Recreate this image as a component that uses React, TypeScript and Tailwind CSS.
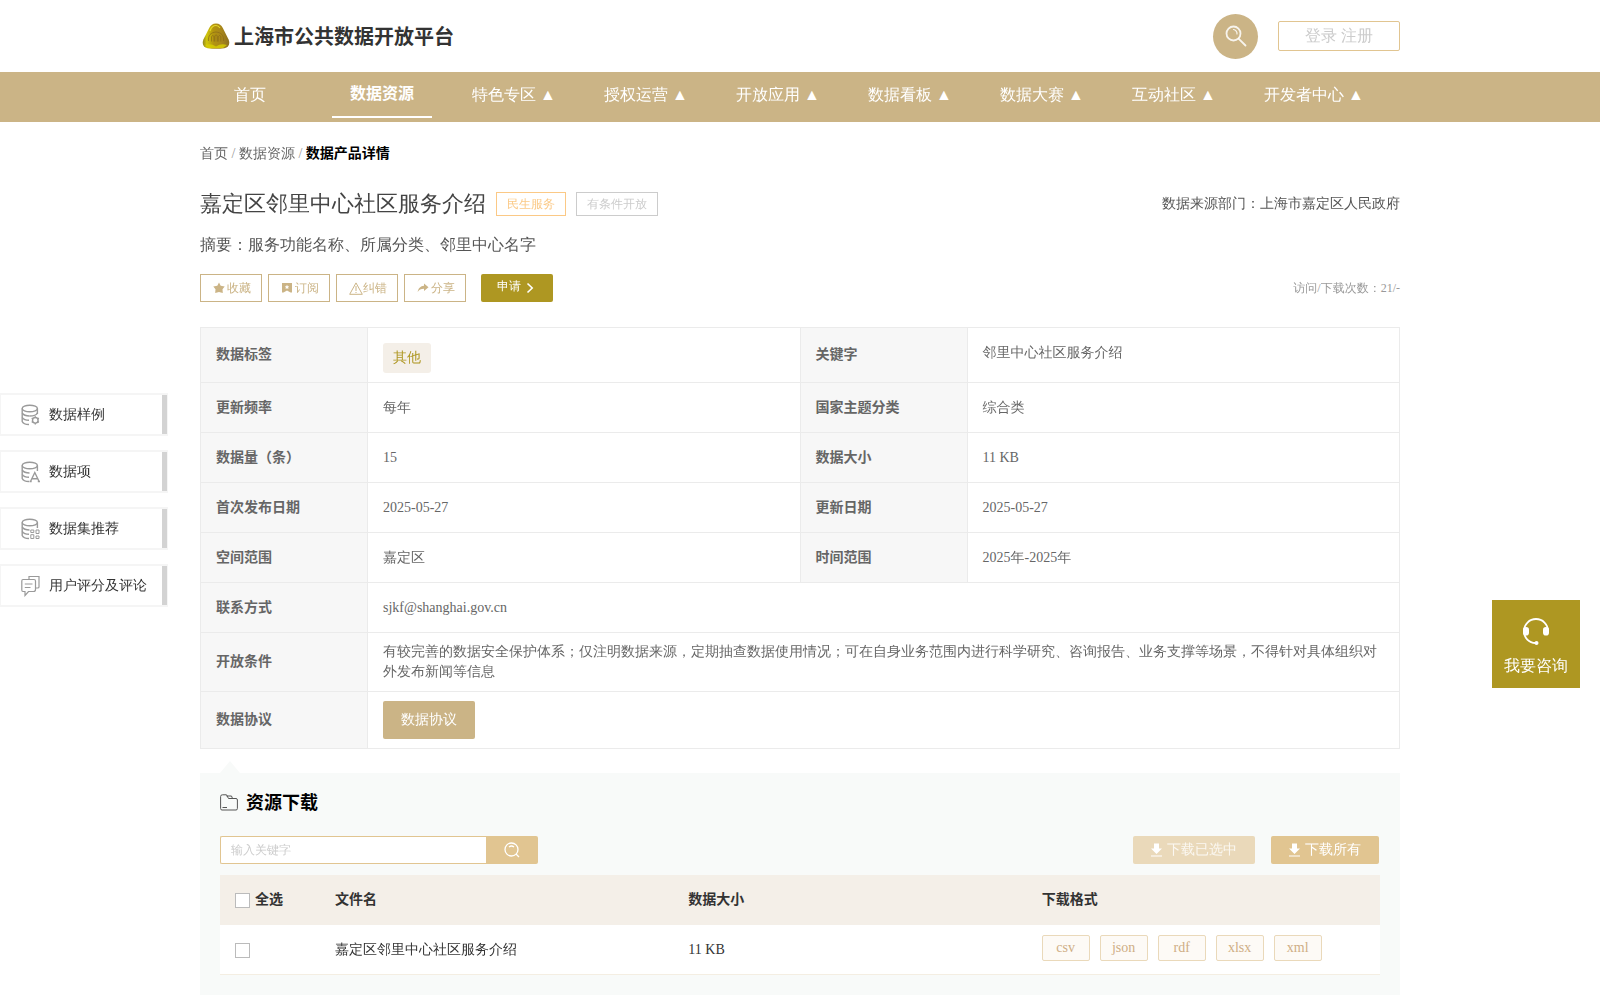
import { useState } from "react";

const navItems = [
  { label: "首页", menu: false },
  { label: "数据资源", menu: false },
  { label: "特色专区", menu: true },
  { label: "授权运营", menu: true },
  { label: "开放应用", menu: true },
  { label: "数据看板", menu: true },
  { label: "数据大赛", menu: true },
  { label: "互动社区", menu: true },
  { label: "开发者中心", menu: true },
];

const formats = ["csv", "json", "rdf", "xlsx", "xml"];

const infoRows = [
  ["更新频率", "每年", "国家主题分类", "综合类"],
  ["数据量（条）", "15", "数据大小", "11 KB"],
  ["首次发布日期", "2025-05-27", "更新日期", "2025-05-27"],
  ["空间范围", "嘉定区", "时间范围", "2025年-2025年"],
];

// Zen Hei has no bold face, so bold text goes straight to Noto
const bold = "font-['Liberation_Serif','Noto_Sans_CJK_SC',serif] font-bold";

function Logo() {
  return (
    <svg width="28" height="26" viewBox="0 0 28 26" aria-hidden="true">
      <defs>
        <linearGradient id="gold" x1="0" y1="0" x2="1" y2="0">
          <stop offset="0" stopColor="#8f8420" />
          <stop offset="0.15" stopColor="#d0c60c" />
          <stop offset="0.4" stopColor="#b3950f" />
          <stop offset="0.7" stopColor="#a8861a" />
          <stop offset="1" stopColor="#8c6f20" />
        </linearGradient>
      </defs>
      <path
        d="M14 0.5C17.5 0.5 19.2 2 20.8 5L26.6 16.5C28.4 21 26.6 24.6 22.4 25.2C17 25.9 11 25.9 5.6 25.2C1.4 24.6-0.4 21 1.4 16.5L7.2 5C8.8 2 10.5 0.5 14 0.5Z"
        fill="url(#gold)"
      />
      <path d="M3 22Q9 20 14 23.5Q19 20 25 22L21 25H7Z" fill="#d8d000" opacity="0.8" />
      <path
        d="M6.5 18C6 12.5 8.5 9.5 14 9C19.500 9.500 22 12.500 21.500 18M9.500 18.500V14C10 12 11.500 12 12 14V18.500M12.800 18.500V13C13.400 11.500 14.800 11.500 15.300 13V18.500M16.200 18.500V14C17 12 18.500 12 18.800 14V18.500"
        fill="none"
        stroke="#8a6a18"
        strokeWidth="0.7"
      />
      <path d="M8 8C9.500 3.500 12 2.500 14 2.500C16 2.500 17 3.500 18 5" fill="none" stroke="#e6da2a" strokeWidth="1.2" />
    </svg>
  );
}

function SearchIcon() {
  return (
    <svg width="22" height="22" viewBox="0 0 22 22" fill="none" stroke="#fff" strokeOpacity="0.85" strokeLinecap="round" aria-hidden="true">
      <circle cx="8.500" cy="8.500" r="7" strokeWidth="1.800" />
      <path d="M8.500 4.500A4 4 0 0 1 12 9" strokeWidth="1.200" />
      <path d="M13.800 13.800L20.500 20.500" strokeWidth="1.800" />
    </svg>
  );
}

function Cylinder({ kind }: { kind: string }) {
  return (
    <svg width="20" height="22" viewBox="0 0 20 22" fill="none" stroke="#9a9a9a" strokeWidth="1.400" aria-hidden="true">
      <ellipse cx="8.800" cy="4.500" rx="7.600" ry="3.300" />
      <path d="M1.200 4.500V17.500C2 19.500 4.500 20.500 8 20.500M16.400 4.500V10" />
      <path d="M1.200 9C2.500 11 5 12 8.500 12" />
      <path d="M1.200 13.300C2.500 15.300 5 16.200 8 16.200" />
      {kind === "sample" && (
        <>
          <path d="M8.500 12C12.500 12 15.500 11 16.400 9" />
          <circle cx="14.300" cy="16.300" r="2.800" />
          <path d="M14.300 12.200V13.500M14.300 19.100V20.400M10.700 14.200L11.900 14.900M16.700 17.700L17.900 18.400M10.700 18.400L11.900 17.700M16.700 14.900L17.900 14.200" />
        </>
      )}
      {kind === "item" && <path d="M9.500 20.500L13.800 11.500L18.100 20.500M11 17.800H16.700M8.500 20.500H10.700M16.800 20.500H19" />}
      {kind === "set" && (
        <path d="M9.800 12H12.800V14.500H9.800ZM15 12H18V15.500H15ZM9.800 16.700H12.800V20.500H9.800ZM15 18H18V20.500H15Z" strokeWidth="1" />
      )}
    </svg>
  );
}

function CommentIcon() {
  return (
    <svg width="20" height="22" viewBox="0 0 20 22" fill="none" stroke="#9a9a9a" strokeWidth="1.200" aria-hidden="true">
      <path d="M2 4.500H13Q14.500 4.500 14.500 6V14.500Q14.500 16.500 12.500 16.500H7.500L4 20.500V16.500H2Q0.800 16.500 0.800 15V6Q0.800 4.500 2 4.500Z" />
      <path d="M8 4.500V1.500H18V12Q18 13 16.500 13H14.500M3.800 9H11.500M3.800 12.500H9.500" />
    </svg>
  );
}

const sideLinks = [
  { label: "数据样例", icon: <Cylinder kind="sample" /> },
  { label: "数据项", icon: <Cylinder kind="item" /> },
  { label: "数据集推荐", icon: <Cylinder kind="set" /> },
  { label: "用户评分及评论", icon: <CommentIcon /> },
];

function DownloadIcon() {
  return (
    <svg width="11" height="14" viewBox="0 0 11 14" fill="#fff" aria-hidden="true">
      <path d="M3 0.500H8V5.500H11L5.500 11L0 5.500H3ZM0 12.500H11V13.500H0Z" />
    </svg>
  );
}

const actions = [
  {
    label: "收藏",
    icon: (
      <svg width="14" height="12" viewBox="0 0 14 12" fill="#cbb486" aria-hidden="true">
        <path d="M6 0.500L7.700 3.700L11.700 4.500L9.500 7.300L9.800 11L6 10L2.200 11L2.500 7.300L0.300 4.500L4.300 3.700Z" />
      </svg>
    ),
  },
  {
    label: "订阅",
    icon: (
      <svg width="14" height="12" viewBox="0 0 14 12" fill="#cbb486" aria-hidden="true">
        <path fillRule="evenodd" d="M1 1H11V10.500H9.500L6 8.500L2.500 10.500H1ZM6 2.800L5.300 4.200L3.800 4.500L4.900 5.500L4.600 7L6 6.300L7.400 7L7.100 5.500L8.200 4.500L6.700 4.200Z" />
      </svg>
    ),
  },
  {
    label: "纠错",
    icon: (
      <svg width="14" height="13" viewBox="0 0 14 13" fill="none" stroke="#cbb486" aria-hidden="true">
        <path d="M7 0.900L13.300 12.300H0.700ZM7 4V9M7 10V11" />
      </svg>
    ),
  },
  {
    label: "分享",
    icon: (
      <svg width="14" height="12" viewBox="0 0 14 12" fill="#cbb486" aria-hidden="true">
        <path d="M7 1.500L11.500 5.300L7 9V6.800C4 6.800 2 7.800 0.700 10C1 6.500 3.500 4 7 3.700Z" />
      </svg>
    ),
  },
];

function Label({ children }: { children: string }) {
  return (
    <th scope="row" className={`border border-[#ebebeb] bg-[#f7f7f7] px-[15px] text-left ${bold}`}>
      {children}
    </th>
  );
}

export default function App() {
  const [keyword, setKeyword] = useState("");
  const [checked, setChecked] = useState(false);

  return (
    <div className="bg-white pb-[5px] font-['Liberation_Serif','WenQuanYi_Zen_Hei','Noto_Sans_CJK_SC',serif] text-[14px] leading-5 text-[#666]">
      <header>
        <div className="mx-auto flex h-[72px] max-w-[1200px] items-center justify-between">
          <a href="#" className="flex items-center gap-1 pl-[2px] text-[20px] leading-7 text-[#333]">
            <Logo />
            <h1 className={`pt-px ${bold}`}>上海市公共数据开放平台</h1>
          </a>
          <div className="flex items-center gap-5">
            <button type="button" aria-label="搜索" className="flex size-[45px] items-center justify-center rounded-full bg-[#cbb486]">
              <SearchIcon />
            </button>
            <div className="h-[30px] w-[122px] rounded-[2px] border border-[#e1c591] text-center text-[16px] leading-7 text-[#ccc]">
              <a href="#">登录</a> <a href="#">注册</a>
            </div>
          </div>
        </div>
        <nav className="h-[50px] bg-[#cbb486]">
          <ul className="mx-auto flex max-w-[1200px] gap-8 text-[16px] text-white">
            {navItems.map((item) => (
              <li key={item.label}>
                <a
                  href="#"
                  className={
                    item.label === "数据资源"
                      ? `block min-w-[100px] border-b-2 border-white text-center leading-[44px] whitespace-nowrap ${bold}`
                      : "block min-w-[100px] px-2 text-center leading-[46px] whitespace-nowrap"
                  }
                >
                  {item.label}
                  {item.menu && " ▲"}
                </a>
              </li>
            ))}
          </ul>
        </nav>
      </header>

      <main className="mx-auto max-w-[1200px]">
        {/* Breadcrumb */}
        <div className="h-[62px] pt-px leading-[62px] text-[#999]">
          <a href="#" className="text-[#666]">首页</a> / <a href="#" className="text-[#666]">数据资源</a> /{" "}
          <b className={`text-black ${bold}`}>数据产品详情</b>
        </div>

        {/* Title */}
        <div className="flex h-10 items-center">
          <h2 className="text-[22px] leading-8 text-[#444]">嘉定区邻里中心社区服务介绍</h2>
          <span className="ml-[10px] h-6 border border-[#fbc986] px-[10px] text-[12px] leading-[22px] text-[#fbc986]">民生服务</span>
          <span className="ml-[10px] h-6 border border-[#ccc] px-[10px] text-[12px] leading-[22px] text-[#ccc]">有条件开放</span>
          <span className="ml-auto text-[#555]">数据来源部门：上海市嘉定区人民政府</span>
        </div>
        <p className="mt-2 text-[16px] leading-[26px] text-[#555]">摘要：服务功能名称、所属分类、邻里中心名字</p>

        <div className="mt-4 flex h-7 items-center gap-[6px]">
          {actions.map((a) => (
            <button
              key={a.label}
              type="button"
              className="flex h-7 items-center border border-[#cbb486] pr-[10px] pl-3 text-[12px] text-[#cbb486]"
            >
              {a.icon}
              {a.label}
            </button>
          ))}
          <button type="button" className="ml-[9px] flex h-7 w-[72px] items-start gap-[5px] rounded-[2px] bg-[#ae9722] pt-[2px] pl-4 text-[12px] leading-5 text-white">
            申请
            <svg width="9" height="12" viewBox="0 0 9 12" fill="none" stroke="#fff" strokeWidth="1.600" className="mt-[6px]" aria-hidden="true">
              <path d="M1.500 1.500L6.200 6L1.500 10.500" />
            </svg>
          </button>
          <span className="ml-auto text-[12px] text-[#999]">访问/下载次数：21/-</span>
        </div>

        {/* Detail table */}
        <table className="mt-[25px] w-full table-fixed border-collapse">
          <colgroup>
            <col className="w-[167px]" />
            <col />
            <col className="w-[167px]" />
            <col />
          </colgroup>
          <tbody>
            <tr className="h-[55px]">
              <Label>数据标签</Label>
              <td className="border border-[#ebebeb] px-[15px] pt-[6px]">
                <span className="block w-fit rounded-[3px] bg-[#f4efe8] px-[10px] leading-[30px] text-[#ae9722]">其他</span>
              </td>
              <Label>关键字</Label>
              <td className="border border-[#ebebeb] px-[15px] pb-1">邻里中心社区服务介绍</td>
            </tr>
            {infoRows.map((row) => (
              <tr key={row[0]} className="h-[50px]">
                <Label>{row[0]}</Label>
                <td className="border border-[#ebebeb] px-[15px]">{row[1]}</td>
                <Label>{row[2]}</Label>
                <td className="border border-[#ebebeb] px-[15px]">{row[3]}</td>
              </tr>
            ))}
            <tr className="h-[50px]">
              <Label>联系方式</Label>
              <td colSpan={3} className="border border-[#ebebeb] px-[15px]">sjkf@shanghai.gov.cn</td>
            </tr>
            <tr className="h-[59px]">
              <Label>开放条件</Label>
              <td colSpan={3} className="border border-[#ebebeb] px-[15px]">
                有较完善的数据安全保护体系；仅注明数据来源，定期抽查数据使用情况；可在自身业务范围内进行科学研究、咨询报告、业务支撑等场景，不得针对具体组织对外发布新闻等信息
              </td>
            </tr>
            <tr className="h-[57px]">
              <Label>数据协议</Label>
              <td colSpan={3} className="border border-[#ebebeb] px-[15px]">
                <button type="button" className="block h-[38px] rounded-[2px] bg-[#cbb486] px-[18px] text-white">
                  数据协议
                </button>
              </td>
            </tr>
          </tbody>
        </table>

        {/* Downloads */}
        <svg width="20" height="12" viewBox="0 0 20 12" className="mt-3 ml-5 block" aria-hidden="true">
          <path d="M10 0L20 12H0Z" fill="#f8faf9" />
        </svg>
        <section className="bg-[#f8faf9] px-5 pb-5">
          <div className="flex h-[63px] items-center gap-2 pb-1">
            <svg width="18" height="17" viewBox="0 0 18 17" fill="none" stroke="#555" aria-hidden="true">
              <path d="M2.500 0.800H6.500L8.500 4.500H16Q17.400 4.500 17.400 6V14.500Q17.400 16 16 16H2Q0.600 16 0.600 14.500V2.500Q0.600 0.800 2.500 0.800ZM6.500 2H11.500L12.500 4.500M2.500 13.500H7" />
            </svg>
            <h3 className={`text-[18px] leading-6 text-black ${bold}`}>资源下载</h3>
          </div>

          <div className="flex h-7 items-center">
            <input
              type="text"
              aria-label="输入关键字"
              placeholder="输入关键字"
              value={keyword}
              onChange={(e) => setKeyword(e.target.value)}
              className="h-7 w-[266px] rounded-l-[2px] border border-r-0 border-[#e1c591] bg-white px-[10px] text-[12px] outline-none placeholder:text-[#ccc]"
            />
            <button type="button" aria-label="搜索资源" className="flex h-7 w-[52px] items-center justify-center rounded-r-[2px] bg-[#e1c591]">
              <svg width="16" height="16" viewBox="0 0 16 16" fill="none" stroke="#fff" strokeWidth="1.300" aria-hidden="true">
                <circle cx="7.500" cy="7.500" r="6.500" />
                <path d="M5 5Q7.500 3 10 5M12 12L15 15" />
              </svg>
            </button>
            <button type="button" disabled className="mr-4 ml-auto flex h-7 w-[122px] items-center justify-center gap-[5px] rounded-[2px] bg-[#ead9ba] text-white/80">
              <DownloadIcon />
              下载已选中
            </button>
            <button type="button" className="mr-px flex h-7 w-[108px] items-center justify-center gap-[5px] rounded-[2px] bg-[#e1c591] text-white">
              <DownloadIcon />
              下载所有
            </button>
          </div>

          <table className="mt-[11px] w-full table-fixed border-separate border-spacing-0 text-left text-[#333]">
            <colgroup>
              <col className="w-[100px]" />
              <col />
              <col />
              <col />
            </colgroup>
            <thead>
              <tr className={`h-[50px] bg-[#f4efe8] ${bold}`}>
                <th scope="col" className="pl-[15px]">
                  <label className="flex items-center gap-[5px]">
                    <input
                      type="checkbox"
                      checked={checked}
                      onChange={() => setChecked(!checked)}
                      className="size-[15px] appearance-none border border-[#bbb] bg-white checked:bg-[#cbb486]"
                    />
                    全选
                  </label>
                </th>
                <th scope="col" className="px-[15px]">文件名</th>
                <th scope="col" className="px-[15px]">数据大小</th>
                <th scope="col" className="px-[15px]">下载格式</th>
              </tr>
            </thead>
            <tbody>
              <tr className="h-[50px] bg-white">
                <td className="border-b border-[#f4eee2] pt-[2px] pl-[15px]">
                  <input
                    type="checkbox"
                    aria-label="选择文件"
                    checked={checked}
                    onChange={() => setChecked(!checked)}
                    className="block size-[15px] appearance-none border border-[#bbb] bg-white checked:bg-[#cbb486]"
                  />
                </td>
                <td className="border-b border-[#f4eee2] px-[15px]">嘉定区邻里中心社区服务介绍</td>
                <td className="border-b border-[#f4eee2] px-[15px]">11 KB</td>
                <td className="border-b border-[#f4eee2] px-[15px] pb-[3px]">
                  <div className="flex gap-[10px]">
                    {formats.map((f) => (
                      <a
                        key={f}
                        href="#"
                        className="h-[26px] w-12 rounded-[2px] border border-[#ead9ba] bg-[#fdfaf6] text-center leading-6 text-[#cfae85]"
                      >
                        {f}
                      </a>
                    ))}
                  </div>
                </td>
              </tr>
            </tbody>
          </table>
        </section>
      </main>

      {/* Side shortcuts */}
      <aside className="fixed top-[393px] left-0 flex flex-col gap-[14px]">
        {sideLinks.map((link) => (
          <a
            key={link.label}
            href="#"
            className="flex h-[43px] w-[168px] items-center gap-2 border-x border-y-2 border-[#f5f5f5] bg-white pl-5 whitespace-nowrap text-[#333]"
          >
            {link.icon}
            {link.label}
            <span className="ml-auto w-[5px] self-stretch bg-[#d3d3d3]" />
          </a>
        ))}
      </aside>

      <button type="button" className="fixed top-[600px] right-5 flex size-[88px] flex-col items-center bg-[#ae9722] pt-[17px] text-[16px] leading-[26px] text-white">
        <svg width="28" height="28" viewBox="0 0 28 28" fill="none" stroke="#fff" aria-hidden="true">
          <path d="M2 14A12 12 0 0 1 26 14M2 14C2 21 7 26 13.500 26" strokeWidth="1.800" />
          <rect x="1" y="10" width="6" height="8.500" rx="2.800" fill="#fff" stroke="none" />
          <rect x="21" y="10" width="6" height="8.500" rx="2.800" fill="#fff" stroke="none" />
          <circle cx="14.500" cy="26" r="2" fill="#fff" stroke="none" />
        </svg>
        <span className="mt-2">我要咨询</span>
      </button>
    </div>
  );
}
